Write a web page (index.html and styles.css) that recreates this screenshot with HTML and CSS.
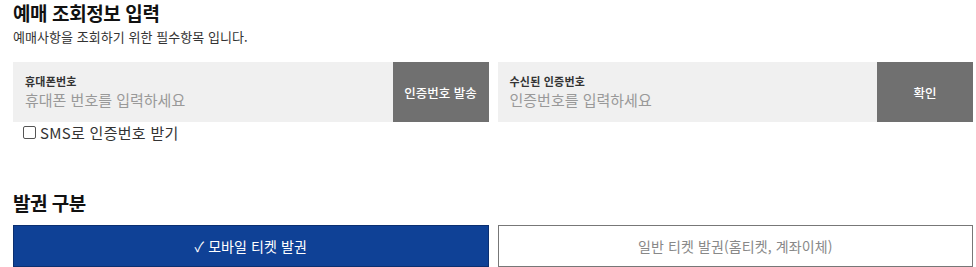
FILE: index.html
```html
<!DOCTYPE html>
<html lang="ko">
<head>
<meta charset="utf-8">
<link rel="stylesheet" href="styles.css">
</head>
<body>
<div class="page">
  <h2 class="title">예매 조회정보 입력</h2>
  <p class="desc">예매사항을 조회하기 위한 필수항목 입니다.</p>
  <div class="row">
    <div class="col">
      <div class="field">
        <div class="field-body">
          <label class="field-label">휴대폰번호</label>
          <span class="field-ph">휴대폰 번호를 입력하세요</span>
        </div>
        <button class="field-btn">인증번호 발송</button>
      </div>
      <label class="sms"><span class="box"></span>SMS로 인증번호 받기</label>
    </div>
    <div class="col">
      <div class="field">
        <div class="field-body">
          <label class="field-label">수신된 인증번호</label>
          <span class="field-ph">인증번호를 입력하세요</span>
        </div>
        <button class="field-btn">확인</button>
      </div>
    </div>
  </div>
  <h2 class="title title2">발권 구분</h2>
  <div class="row tabs">
    <div class="tab tab-on">✓ 모바일 티켓 발권</div>
    <div class="tab">일반 티켓 발권(홈티켓, 계좌이체)</div>
  </div>
</div>
</body>
</html>
```
FILE: styles.css
```css
* { box-sizing: border-box; }
html, body { margin: 0; padding: 0; background: #fff; }
body { font-family: "Noto Sans CJK KR", "Noto Sans", sans-serif; color: #222; }
.page { padding: 0 3px 0 13px; }
.title { margin: 0; padding-top: 0; font-size: 19px; font-weight: 700; line-height: 26px; letter-spacing: -0.4px; color: #111; }
.desc { margin: 2px 0 0; font-size: 13px; line-height: 17px; color: #333; letter-spacing: 0.05px; }
.row { display: flex; gap: 9px; }
.col { flex: 1; }
.row:first-of-type { margin-top: 17px; }
.field { display: flex; height: 60px; background: #f0f0f0; }
.field-body { flex: 1; padding: 12px 12px 0; display: flex; flex-direction: column; }
.field-label { font-size: 11px; font-weight: 700; line-height: 15px; color: #333; letter-spacing: 0.2px; }
.field-ph { font-size: 15px; line-height: 22px; color: #999; }
.field-btn { width: 96px; border: 0; background: #707070; color: #fff; font-family: inherit; font-size: 12.5px; font-weight: 500; padding: 0; }
.sms { display: flex; align-items: center; gap: 4px; margin-left: 10px; height: 20px; font-size: 15px; color: #333; letter-spacing: 0.3px; }
.box { width: 13px; height: 13px; border: 1px solid #555; border-radius: 2px; background: #fff; }
.title2 { margin-top: 48px; letter-spacing: -0.5px; }
.tabs { margin-top: 9px; }
.tab { flex: 1; height: 42px; display: flex; align-items: center; justify-content: center; font-size: 14px; color: #888; border: 1px solid #777; letter-spacing: 0.1px; }
.tab-on { background: #0f4196; border-color: #0b2f70; color: #fff; }
```
